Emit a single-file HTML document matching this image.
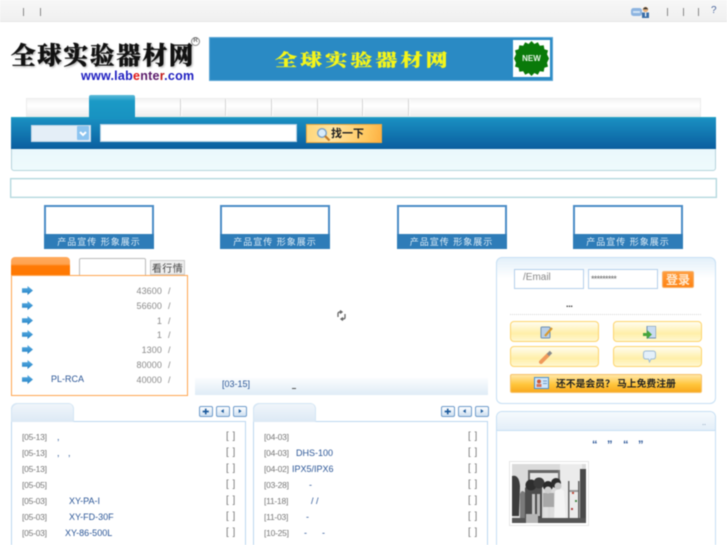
<!DOCTYPE html>
<html lang="zh">
<head>
<meta charset="utf-8">
<title>全球实验器材网</title>
<style>
html,body{margin:0;padding:0;background:#fff;width:727px;height:545px;overflow:hidden}
body{position:relative;font-family:"Liberation Sans","Noto Sans CJK SC",sans-serif;font-size:9px;color:#777}
div,span,svg{position:absolute;box-sizing:border-box}
#w{left:0;top:0;width:727px;height:545px;overflow:hidden;background:#fff;filter:blur(.4px)}
.t{white-space:nowrap;line-height:12px}
.sep{width:1px;background:#888;height:8px;top:8px}
.tabsep{width:1px;top:99px;height:17px;background:#d4d4d4;box-shadow:1px 0 0 #fff}
.prod{width:110px;height:44px;top:205px;border:2px solid #4b8cc6;background:#fff}
.prod div{left:-2px;right:-2px;bottom:-2px;height:15px;background:#2e7cb8;color:#dcebf6;font-size:9px;line-height:16px;text-align:center;letter-spacing:1px;white-space:nowrap}
.arrow{left:22px;width:11px;height:9px}
.n{right:565px;color:#8a8a8a;letter-spacing:.1px}
.sl{left:168px;color:#888}
.d{color:#777;font-size:8.5px;letter-spacing:-.25px}
.a{color:#2a5596}
.b{color:#777;font-size:10px;letter-spacing:.5px}
.sq{top:406px;height:11px;width:13.5px;border:1px solid #6f9ccb;border-radius:2px;background:linear-gradient(#fff,#cfe0f1)}
.tab2{top:403px;width:63px;height:19px;border-radius:6px 6px 0 0;background:linear-gradient(#f1f6fb,#dce9f5);box-shadow:inset 1px 1px 0 #d3e5f4,inset -1px 0 0 #d3e5f4}
.pan{top:421px;width:235px;height:130px;box-shadow:inset 0 0 0 1px #bcd7f0;background:#fff}
.yb{width:89px;height:21px;border:1px solid #fdd46c;border-radius:4px;background:linear-gradient(#fffdf0,#ffefa8 60%,#fff8d2)}
.lbl{height:20px;top:269px;box-shadow:inset 0 0 0 1px #b4cfeb;background:#fff;width:70px}
</style>
</head>
<body>
<div id="w">
<!-- top bar -->
<div style="left:0;top:0;width:727px;height:22px;background:linear-gradient(#f7f7f7,#f0f0f0);border-bottom:1px solid #e6e6e6"></div>
<div class="sep" style="left:23px"></div>
<div class="sep" style="left:40px"></div>
<svg style="left:631px;top:6px" width="20" height="12" viewBox="0 0 20 12">
<rect x="0" y="2" width="11" height="8" rx="2.5" fill="#8db4e0"/><rect x="2" y="5" width="7" height="2" fill="#cfe1f5"/>
<circle cx="14.5" cy="3.5" r="2.7" fill="#e8b27c"/><path d="M11.8 3.2 Q14.5 -.6 17.2 3.2Z" fill="#333"/><rect x="11" y="6.5" width="7" height="5.5" fill="#3a6ea8"/><rect x="14" y="6.5" width="1.2" height="4" fill="#fff"/>
</svg>
<div class="sep" style="left:667px"></div>
<div class="sep" style="left:683px"></div>
<div class="sep" style="left:698px"></div>
<div class="t" style="left:711px;top:5px;font-size:10px;color:#48659c">?</div>

<!-- logo -->
<div class="t" style="left:11px;top:41px;font:900 24.5px/28px 'Noto Serif CJK SC','Liberation Serif',serif;color:#111;letter-spacing:1.8px;-webkit-text-stroke:.4px #111;text-shadow:1px 1px 2px #9a9a9a">全球实验器材网</div>
<div class="t" style="left:81px;top:70px;font:700 12.5px/13px 'Liberation Sans',sans-serif;color:#1c1cc0;letter-spacing:.25px">www.lab<span style="position:static;color:#e01818">e</span><span style="position:static;color:#5a1a6a">nte</span><span style="position:static;color:#c01818">r</span><span style="position:static">.com</span></div>
<div class="t" style="left:191px;top:37px;width:9px;height:9px;border:1px solid #888;border-radius:50%;font:700 6px/7px 'Liberation Sans',sans-serif;color:#666;text-align:center">R</div>

<!-- banner -->
<div style="left:209px;top:37px;width:344px;height:44px;background:#2a8ac4;border:1px solid #5ba6d6"></div>
<div class="t" style="left:275px;top:46px;font:900 22px/27px 'Noto Serif CJK SC',serif;color:#f5f51a;letter-spacing:3.1px;-webkit-text-stroke:.3px #f5f51a;transform:scaleY(.78);transform-origin:0 50%">全球实验器材网</div>
<div style="left:513px;top:40px;width:37px;height:37px;background:#fff"></div>
<svg style="left:514px;top:41px" width="35" height="35" viewBox="0 0 35 35">
<polygon fill="#0a7a0a" points="17.5,0 20.4,3 23.8,1.2 25.8,4.8 29.7,4.2 30.4,8.2 34,9.4 33,13.2 35,17.5 33,21.8 34,25.6 30.4,26.8 29.7,30.8 25.8,30.2 23.8,33.8 20.4,32 17.5,35 14.6,32 11.2,33.8 9.2,30.2 5.3,30.8 4.6,26.8 1,25.6 2,21.8 0,17.5 2,13.2 1,9.4 4.6,8.2 5.3,4.2 9.2,4.8 11.2,1.2 14.6,3"/>
<text x="17.5" y="20" font-family="Liberation Sans" font-weight="700" font-size="8" fill="#e8f5e8" text-anchor="middle">NEW</text>
</svg>

<!-- tabs -->
<div style="left:26px;top:98px;width:675px;height:20px;background:linear-gradient(#f4f4f4,#fff 35%,#eaeaea);border:1px solid #ececec;border-bottom:0"></div>
<div class="tabsep" style="left:180px"></div>
<div class="tabsep" style="left:225px"></div>
<div class="tabsep" style="left:271px"></div>
<div class="tabsep" style="left:317px"></div>
<div class="tabsep" style="left:362px"></div>
<div class="tabsep" style="left:408px"></div>

<!-- search band -->
<div style="left:11px;top:117px;width:705px;height:54px;background:linear-gradient(#e3f3fa,#effbfd);border:1px solid #b6d4dc;border-radius:0 0 3px 3px"></div>
<div style="left:11px;top:117px;width:705px;height:32px;background:linear-gradient(#1a90c2,#0a5e9f);border-top:1px solid #27a3c4"></div>
<div style="left:89px;top:95px;width:46px;height:24px;background:linear-gradient(#5cbad9,#1b9ac6 25%,#1892c1);border-radius:2px 2px 0 0"></div>
<div style="left:31px;top:125px;width:60px;height:17px;background:#e4eef7;border:1px solid #c8d8e8"></div>
<svg style="left:77px;top:126px" width="12" height="14" viewBox="0 0 12 14"><rect width="12" height="14" rx="1" fill="#8cc4f0"/><path d="M3 6l3 3 3-3" stroke="#fff" stroke-width="2" fill="none"/></svg>
<div style="left:100px;top:124px;width:197px;height:18px;background:#fff;border:1px solid #b9d2e5"></div>
<div style="left:306px;top:124px;width:76px;height:19px;background:linear-gradient(100deg,#ffd679,#ffe3a0 35%,#ffc75e 80%,#fdb043);border:1px solid #f2a93c"></div>
<svg style="left:316px;top:127px" width="15" height="15" viewBox="0 0 15 15"><circle cx="6" cy="6" r="4.3" fill="#d8ecfb" stroke="#7aa0c8" stroke-width="1.4"/><path d="M9 9l4.5 4.5" stroke="#c07a2a" stroke-width="2.2"/></svg>
<div class="t" style="left:331px;top:126px;font:700 11px/15px 'Noto Sans CJK SC',sans-serif;color:#222">找一下</div>

<!-- info bar -->
<div style="left:10px;top:178px;width:707px;height:20px;background:#fff;border:1px solid #b0d6dc;box-shadow:inset 0 0 0 .5px #cfe6ea"></div>

<!-- product boxes -->
<div class="prod" style="left:44px"><div>产品宣传 形象展示</div></div>
<div class="prod" style="left:220px"><div>产品宣传 形象展示</div></div>
<div class="prod" style="left:396.5px"><div>产品宣传 形象展示</div></div>
<div class="prod" style="left:573px"><div>产品宣传 形象展示</div></div>

<!-- quote panel -->
<div style="left:11px;top:257px;width:59px;height:20px;border-radius:4px 4px 0 0;background:linear-gradient(#ffa95c,#ffa34f 35%,#ff7a05 45%,#ff7800)"></div>
<div style="left:79px;top:258px;width:67px;height:19px;background:#fff;border:1px solid #bbb;border-radius:2px"></div>
<div class="t" style="left:150px;top:260px;width:35px;height:15px;background:#eee;border:1px solid #ccc;font:10px/13px 'Noto Sans CJK SC',sans-serif;color:#444;text-align:center;letter-spacing:.4px">看行情</div>
<div style="left:11px;top:275px;width:177px;height:121px;background:#fff;box-shadow:inset 0 0 0 1px #ffa650"></div>

<svg style="position:absolute;left:0;top:0" width="0" height="0"><defs><linearGradient id="ar" x1="0" y1="0" x2="0" y2="1"><stop offset="0" stop-color="#5fb0e4"/><stop offset="1" stop-color="#1f7fc4"/></linearGradient></defs></svg>
<svg class="arrow" style="top:286px" viewBox="0 0 11 9"><path d="M0 2.2h5.5V0L11 4.5 5.5 9V6.8H0z" fill="url(#ar)"/></svg>
<svg class="arrow" style="top:301px" viewBox="0 0 11 9"><path d="M0 2.2h5.5V0L11 4.5 5.5 9V6.8H0z" fill="url(#ar)"/></svg>
<svg class="arrow" style="top:316px" viewBox="0 0 11 9"><path d="M0 2.2h5.5V0L11 4.5 5.5 9V6.8H0z" fill="url(#ar)"/></svg>
<svg class="arrow" style="top:330px" viewBox="0 0 11 9"><path d="M0 2.2h5.5V0L11 4.5 5.5 9V6.8H0z" fill="url(#ar)"/></svg>
<svg class="arrow" style="top:345px" viewBox="0 0 11 9"><path d="M0 2.2h5.5V0L11 4.5 5.5 9V6.8H0z" fill="url(#ar)"/></svg>
<svg class="arrow" style="top:360px" viewBox="0 0 11 9"><path d="M0 2.2h5.5V0L11 4.5 5.5 9V6.8H0z" fill="url(#ar)"/></svg>
<svg class="arrow" style="top:375px" viewBox="0 0 11 9"><path d="M0 2.2h5.5V0L11 4.5 5.5 9V6.8H0z" fill="url(#ar)"/></svg>

<div class="t n" style="top:285px">43600</div><div class="t sl" style="top:285px">/</div>
<div class="t n" style="top:300px">56600</div><div class="t sl" style="top:300px">/</div>
<div class="t n" style="top:315px">1</div><div class="t sl" style="top:315px">/</div>
<div class="t n" style="top:329px">1</div><div class="t sl" style="top:329px">/</div>
<div class="t n" style="top:344px">1300</div><div class="t sl" style="top:344px">/</div>
<div class="t n" style="top:359px">80000</div><div class="t sl" style="top:359px">/</div>
<div class="t n" style="top:374px">40000</div><div class="t sl" style="top:374px">/</div>
<div class="t a" style="left:51px;top:373px">PL-RCA</div>

<!-- centre -->
<svg style="left:336px;top:310px" width="11" height="11" viewBox="0 0 11 11"><path d="M2 7V3.5Q2 2 4 2h2M4 .5L6 2 4 3.5M9 4v3.5Q9 9 7 9H5M7 7.5L5 9l2 1.5" stroke="#666" stroke-width="1.3" fill="none"/></svg>
<div style="left:195px;top:378px;width:293px;height:17px;background:linear-gradient(#fbfdfe,#dfecf6)"></div>
<div class="t a" style="left:222px;top:378px">[03-15]</div>
<div style="left:292px;top:388px;width:4px;height:1px;background:#555"></div>

<!-- login -->
<div style="left:496px;top:257px;width:220px;height:147px;background:linear-gradient(#e3f0fa,#fff 20px);border:1px solid #c6dff4;border-radius:6px"></div>
<div class="lbl t" style="left:514px;padding-left:9px;font-size:10px;line-height:18px;color:#888">/Email</div>
<div class="lbl t" style="left:588px;padding-left:3px;font-size:9px;line-height:20px;color:#666;letter-spacing:-.7px">*********</div>
<div class="t" style="left:662px;top:271px;width:32px;height:17px;background:linear-gradient(#ff9c3c,#ff8312);border:1px solid #f5b06a;border-radius:2px;font:700 12px/15px 'Noto Sans CJK SC',sans-serif;color:#ffe9cf;text-align:center">登录</div>
<div class="t" style="left:566px;top:298px;color:#333;letter-spacing:-.3px;font-size:9px;font-weight:700">...</div>
<div style="left:510px;top:314px;width:191px;height:1px;border-top:1px dotted #d6d6d6"></div>
<div class="yb" style="left:510px;top:321px"></div>
<div class="yb" style="left:613px;top:321px"></div>
<div class="yb" style="left:510px;top:346px"></div>
<div class="yb" style="left:613px;top:346px"></div>
<svg style="left:540px;top:326px" width="13" height="13" viewBox="0 0 13 13"><rect x="1" y="1" width="9" height="11" rx="1" fill="#b9cfe6" stroke="#6d8fb5"/><path d="M5 10l7-8" stroke="#d89a30" stroke-width="2.2"/></svg>
<svg style="left:643px;top:326px" width="13" height="13" viewBox="0 0 13 13"><rect x="4" y="0" width="9" height="12" fill="#c9dcf0" stroke="#6d8fb5"/><path d="M0 7h4V4l5 4.5L4 13v-3H0z" fill="#47a53a"/></svg>
<svg style="left:539px;top:350px" width="14" height="14" viewBox="0 0 14 14"><path d="M2 12l7-7" stroke="#f09a5a" stroke-width="4" stroke-linecap="round"/><path d="M9 5l3-3" stroke="#8a8a8a" stroke-width="3.4"/></svg>
<svg style="left:643px;top:350px" width="13" height="13" viewBox="0 0 13 13"><path d="M3 1h7q2.5 0 2.5 2.5v3Q12.500 9 10 9H8L6.500 12 5.500 9H3Q.5 9 .5 6.500v-3Q.5 1 3 1z" fill="#e4f0fa" stroke="#9fbcd6"/></svg>
<div style="left:510px;top:374px;width:192px;height:19px;background:linear-gradient(#ffe7a8,#ffc63c 55%,#f9a91e);border:1px solid #f7c36a;border-radius:2px"></div>
<svg style="left:534px;top:377px" width="15" height="12" viewBox="0 0 15 12"><rect x=".5" y=".5" width="14" height="11" fill="#cfe6fa" stroke="#4a8fcf"/><circle cx="5" cy="4.500" r="2" fill="#c9583a"/><rect x="2.500" y="7" width="5" height="3" fill="#d9725a"/><path d="M9 4h4M9 6.500h4" stroke="#6f9cc8"/></svg>
<div class="t" style="left:556px;top:376px;font:700 9.8px/15px 'Noto Sans CJK SC',sans-serif;color:#222">还不是会员？ 马上免费注册</div>

<!-- news panels -->
<div class="pan" style="left:11px"></div>
<div class="tab2" style="left:11px"></div>
<div class="pan" style="left:253px"></div>
<div class="tab2" style="left:253px"></div>

<svg class="sq" style="left:199px;padding:0" viewBox="0 0 13.500 11"><path d="M3 5.500h7.500M6.750 2v7" stroke="#1c5a9c" stroke-width="2"/></svg>
<svg class="sq" style="left:216px" viewBox="0 0 13.500 11"><path d="M8 2.500v5L4.500 5z" fill="#1c5a9c"/></svg>
<svg class="sq" style="left:233px" viewBox="0 0 13.500 11"><path d="M5.500 2.500v5L9 5z" fill="#1c5a9c"/></svg>
<svg class="sq" style="left:441px" viewBox="0 0 13.500 11"><path d="M3 5.500h7.500M6.750 2v7" stroke="#1c5a9c" stroke-width="2"/></svg>
<svg class="sq" style="left:458px" viewBox="0 0 13.500 11"><path d="M8 2.500v5L4.500 5z" fill="#1c5a9c"/></svg>
<svg class="sq" style="left:475px" viewBox="0 0 13.500 11"><path d="M5.500 2.500v5L9 5z" fill="#1c5a9c"/></svg>

<!-- left news -->
<div class="t d" style="left:22px;top:431px">[05-13]</div><div class="t b" style="left:226px;top:431px">[ ]</div>
<div class="t d" style="left:22px;top:447px">[05-13]</div><div class="t b" style="left:226px;top:447px">[ ]</div>
<div class="t d" style="left:22px;top:463px">[05-13]</div><div class="t b" style="left:226px;top:463px">[ ]</div>
<div class="t d" style="left:22px;top:479px">[05-05]</div><div class="t b" style="left:226px;top:479px">[ ]</div>
<div class="t d" style="left:22px;top:495px">[05-03]</div><div class="t b" style="left:226px;top:495px">[ ]</div>
<div class="t d" style="left:22px;top:511px">[05-03]</div><div class="t b" style="left:226px;top:511px">[ ]</div>
<div class="t d" style="left:22px;top:527px">[05-03]</div><div class="t b" style="left:226px;top:527px">[ ]</div>
<div class="t a" style="left:57px;top:431px">,</div>
<div class="t a" style="left:57px;top:447px">,</div>
<div class="t a" style="left:68px;top:447px">,</div>
<div class="t a" style="left:69px;top:495px">XY-PA-I</div>
<div class="t a" style="left:69px;top:511px">XY-FD-30F</div>
<div class="t a" style="left:65px;top:527px">XY-86-500L</div>

<!-- right news -->
<div class="t d" style="left:264px;top:431px">[04-03]</div><div class="t b" style="left:468px;top:431px">[ ]</div>
<div class="t d" style="left:264px;top:447px">[04-03]</div><div class="t b" style="left:468px;top:447px">[ ]</div>
<div class="t d" style="left:264px;top:463px">[04-02]</div><div class="t b" style="left:468px;top:463px">[ ]</div>
<div class="t d" style="left:264px;top:479px">[03-28]</div><div class="t b" style="left:468px;top:479px">[ ]</div>
<div class="t d" style="left:264px;top:495px">[11-18]</div><div class="t b" style="left:468px;top:495px">[ ]</div>
<div class="t d" style="left:264px;top:511px">[11-03]</div><div class="t b" style="left:468px;top:511px">[ ]</div>
<div class="t d" style="left:264px;top:527px">[10-25]</div><div class="t b" style="left:468px;top:527px">[ ]</div>
<div class="t a" style="left:296px;top:447px">DHS-100</div>
<div class="t a" style="left:292px;top:463px">IPX5/IPX6</div>
<div class="t a" style="left:309px;top:479px">-</div>
<div class="t a" style="left:311px;top:495px">/ /</div>
<div class="t a" style="left:306px;top:511px">-</div>
<div class="t a" style="left:304px;top:527px">-</div>
<div class="t a" style="left:322px;top:527px">-</div>

<!-- right bottom panel -->
<div style="left:496px;top:411px;width:220px;height:150px;background:#fff;border:1px solid #c6dff4;border-radius:6px 6px 0 0"></div>
<div style="left:497px;top:412px;width:218px;height:19px;background:linear-gradient(#f6fafd,#e3eef8);border-bottom:1px solid #c6dff4;border-radius:5px 5px 0 0"></div>
<div class="t" style="left:702px;top:417px;color:#7a94b0;font-size:8px;letter-spacing:-.3px">..</div>
<div class="t a" style="left:592px;top:439px;font-size:11px;font-weight:700">“</div>
<div class="t a" style="left:607px;top:439px;font-size:11px;font-weight:700">”</div>
<div class="t a" style="left:623px;top:439px;font-size:11px;font-weight:700">“</div>
<div class="t a" style="left:638px;top:439px;font-size:11px;font-weight:700">”</div>
<div style="left:509px;top:461px;width:80px;height:65px;background:#fff;border:1px solid #e6e6e6"></div>
<svg style="left:512px;top:464px" width="74" height="59" viewBox="0 0 74 59">
<rect width="74" height="59" fill="#dadada"/>
<rect x="16" y="6" width="32" height="3" fill="#666"/>
<rect x="16" y="6" width="2" height="14" fill="#666"/>
<rect x="46" y="6" width="2" height="14" fill="#777"/>
<rect x="18" y="9" width="28" height="10" fill="#e4e4e4"/>
<rect x="48" y="0" width="22" height="59" fill="#ebebeb"/>
<path d="M0 12Q7 10 8 22L7 52H0z" fill="#3c3c3c"/>
<path d="M8 59V30Q10 24 14 30V59z" fill="#7a7a7a"/>
<path d="M13 59V24Q20 14 30 22V59z" fill="#4c4c4c"/>
<circle cx="19" cy="21" r="5.500" fill="#2e2e2e"/>
<circle cx="27" cy="19" r="5.500" fill="#3a3a3a"/>
<circle cx="36" cy="22" r="5" fill="#2a2a2a"/>
<circle cx="44" cy="19" r="5" fill="#2c2c2c"/>
<rect x="20" y="30" width="3" height="22" fill="#c4c4c4"/><rect x="25" y="30" width="3" height="22" fill="#bbb"/>
<rect x="31" y="29" width="11" height="14" fill="#a8a8a8"/>
<rect x="32" y="43" width="4" height="11" fill="#e0e0e0"/><rect x="38" y="43" width="4" height="11" fill="#ddd"/>
<circle cx="36" cy="26" r="3.500" fill="#cfcfcf"/>
<path d="M42 57l1-30q5-4 9 0l2 30z" fill="#f4f4f4"/>
<circle cx="46" cy="22" r="3.500" fill="#c8c8c8"/>
<rect x="56" y="17" width="1.500" height="37" fill="#666"/><rect x="66" y="17" width="1.500" height="37" fill="#666"/>
<rect x="57.500" y="26" width="8.500" height="2" fill="#999"/>
<rect x="60" y="28" width="2" height="2" fill="#c05040"/><rect x="63" y="36" width="2" height="2" fill="#4a8a4a"/><rect x="59" y="44" width="2" height="2" fill="#b04040"/>
<rect x="68" y="5" width="6" height="54" fill="#4a4a4a"/>
<rect x="0" y="54" width="74" height="5" fill="#555"/>
<rect x="14" y="50" width="12" height="9" fill="#b5b5b5"/>
</svg>
</div>
</body>
</html>
